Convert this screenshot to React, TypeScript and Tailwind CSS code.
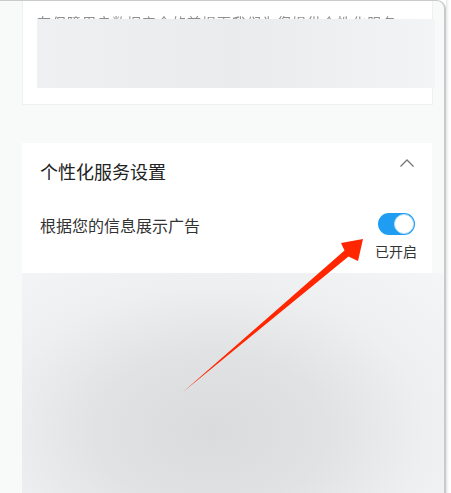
export default function App() {
  const font = { fontFamily: '"Noto Sans CJK SC", "Noto Sans", sans-serif' };

  return (
    <div className="w-[451px] h-[493px] bg-white flex overflow-hidden relative" style={font}>
      {/* page panel */}
      <div className="w-[446px] h-full bg-[#f8f9f9] border-t border-r-[2px] border-[#c9cacb] rounded-tr-[9px] flex flex-col pl-[22px] pr-[11px]">
        {/* first card, its top scrolled away */}
        <div className="h-[104px] bg-white border border-[#eeeff0] border-t-0 pl-[14px] pt-[11px] flex flex-col">
          <p className="text-[14px] leading-[20px] text-[#8e8e8e] blur-[0.6px] whitespace-nowrap tracking-[1px]">
            在保障用户数据安全的前提下我们为您提供个性化服务
          </p>
          {/* blurred block covering the rest of the text */}
          <div className="relative -mt-[13px] h-[69px] mr-[-3px] bg-gradient-to-r from-[#eef0f1] via-[#eaebed] to-[#f3f4f5]" />
        </div>

        {/* personalized service card */}
        <div className="mt-[38px] bg-white pl-[18px] pr-[17px] pt-[14px] pb-[12px] mr-[1px]">
          <div className="flex items-start justify-between">
            <h2 className="mt-[2px] text-[18px] leading-[24px] text-[#222]">个性化服务设置</h2>
            <svg width="16" height="10" viewBox="0 0 16 10" className="mt-[1px]">
              <path d="M1.5 8.5 L8 2 L14.5 8.5" fill="none" stroke="#777" strokeWidth="1.3" />
            </svg>
          </div>
          <div className="mt-[30px] flex items-start justify-between">
            <span className="mt-[1px] text-[16px] leading-[22px] text-[#333]">根据您的信息展示广告</span>
            <div className="flex flex-col items-end">
              <div className="w-[37px] h-[22px] rounded-full bg-[#1e9df2] flex items-center justify-end pr-[1px]">
                <div className="w-[20px] h-[20px] rounded-full bg-white border border-[#bfe3fb]" />
              </div>
              <span className="mt-[6px] mr-[-2px] text-[14px] leading-[20px] text-[#333]">已开启</span>
            </div>
          </div>
        </div>

        {/* blurred area */}
        <div className="flex-1 mr-[-11px] bg-[radial-gradient(ellipse_at_45%_72%,#dadbdd_0%,#e1e2e3_35%,#eeeff0_65%,#f5f6f7_100%)]" />
      </div>
      <div className="w-[3px] h-full bg-gradient-to-r from-[#e6e6e6] to-white" />

      {/* red arrow annotation */}
      <svg className="absolute left-0 top-0 pointer-events-none" width="451" height="493" viewBox="0 0 451 493">
        <polygon points="183,392 344.5,250.5 341,243 363,239 358,261 348.5,256.5" fill="#ff2600" />
      </svg>
    </div>
  );
}
